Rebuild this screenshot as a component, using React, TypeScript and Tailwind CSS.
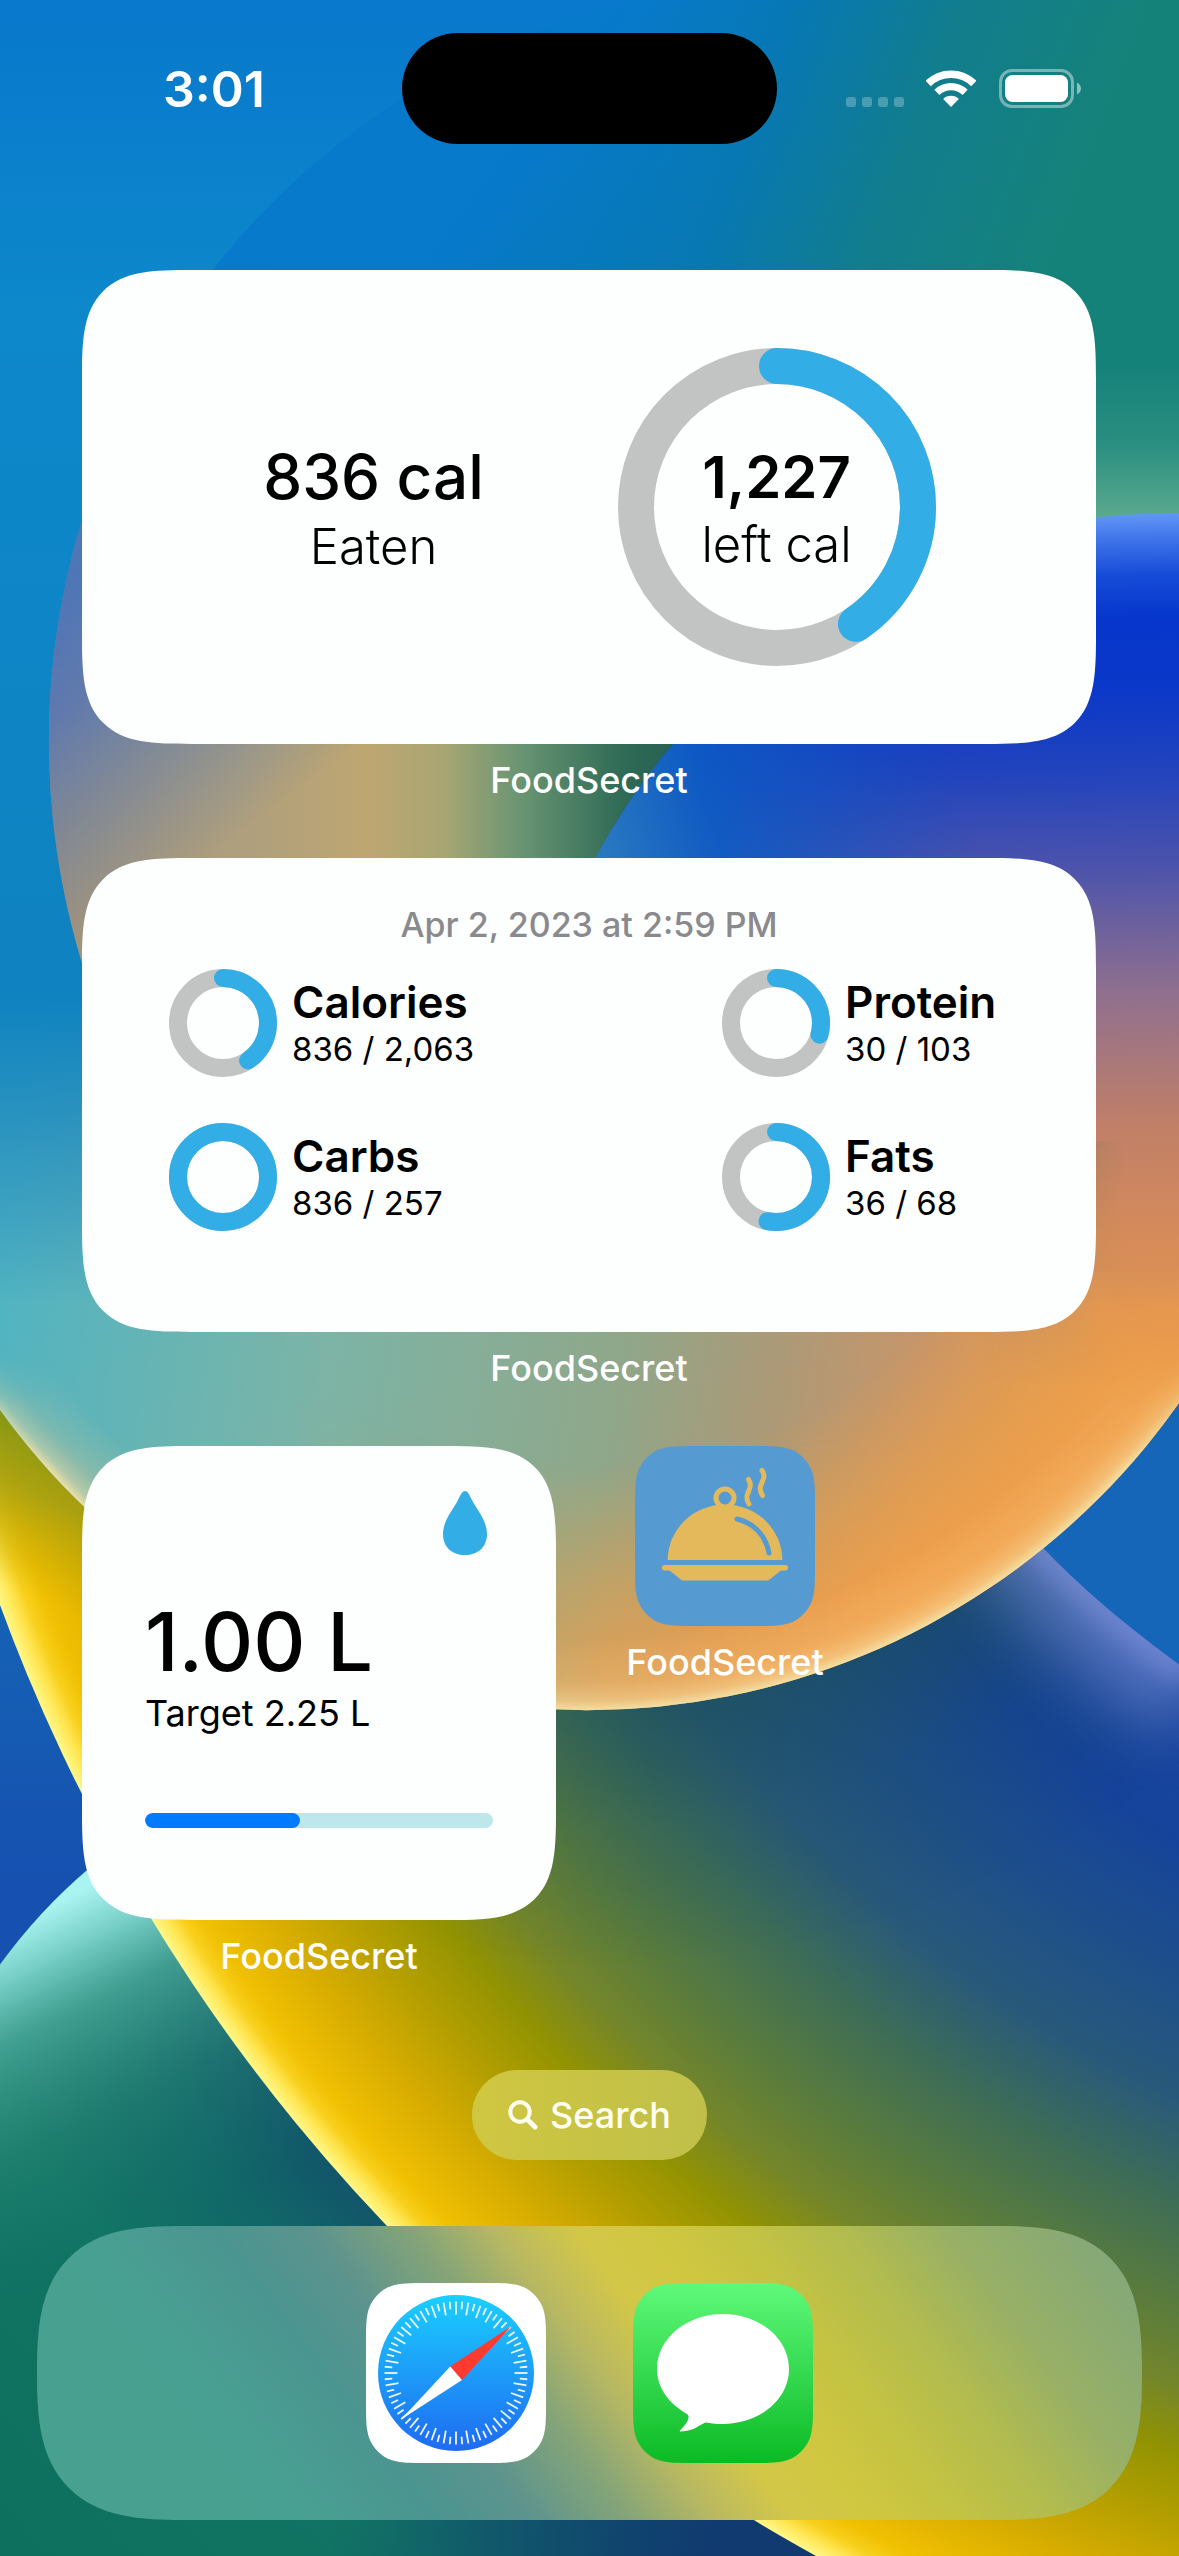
import React from "react";

const SQUIRCLE =
  "M61 0H119C136.500 0 145.300 0 154.700 3C165.100 6.800 173.200 14.900 177 25.300C180 34.700 180 43.500 180 61V119C180 136.500 180 145.300 177 154.700C173.200 165.100 165.100 173.200 154.700 177C145.300 180 136.500 180 119 180H61C43.500 180 34.700 180 25.300 177C14.900 173.200 6.800 165.100 3 154.700C0 145.300 0 136.500 0 119V61C0 43.500 0 34.700 3 25.300C6.800 14.900 14.900 6.800 25.300 3C34.700 0 43.500 0 61 0Z";

function Wallpaper() {
  return (
    <svg
      className="absolute inset-0 h-full w-full"
      viewBox="0 0 723 1568"
      preserveAspectRatio="xMidYMid slice"
      aria-hidden="true"
    >
      <defs>
        <linearGradient id="sky" x1="0" y1="0" x2="0" y2="1568" gradientUnits="userSpaceOnUse">
          <stop offset="0" stopColor="#0878cc" />
          <stop offset="0.12" stopColor="#0d88cb" />
          <stop offset="0.4" stopColor="#0f82c0" />
          <stop offset="0.57" stopColor="#146cb8" />
          <stop offset="0.74" stopColor="#1650b0" />
        </linearGradient>
        <linearGradient id="backBall" x1="170" y1="40" x2="560" y2="330" gradientUnits="userSpaceOnUse">
          <stop offset="0" stopColor="#087acc" />
          <stop offset="0.32" stopColor="#0779ca" />
          <stop offset="0.48" stopColor="#0679b8" />
          <stop offset="0.7" stopColor="#117c8e" />
          <stop offset="1" stopColor="#15827a" />
        </linearGradient>
        <linearGradient id="topTint" x1="350" y1="60" x2="640" y2="170" gradientUnits="userSpaceOnUse">
          <stop offset="0" stopColor="#067acc" stopOpacity="0" />
          <stop offset="0.35" stopColor="#0778b4" stopOpacity="0.9" />
          <stop offset="0.65" stopColor="#117d8e" />
          <stop offset="1" stopColor="#15827a" />
        </linearGradient>
        <linearGradient id="backLow" x1="30" y1="0" x2="420" y2="0" gradientUnits="userSpaceOnUse">
          <stop offset="0" stopColor="#a0927c" />
          <stop offset="0.3" stopColor="#ae9f7e" />
          <stop offset="0.5" stopColor="#bea671" />
          <stop offset="0.62" stopColor="#a8a673" />
          <stop offset="0.74" stopColor="#6a9573" />
          <stop offset="0.9" stopColor="#2f6b56" />
          <stop offset="1" stopColor="#255f52" />
        </linearGradient>
        <linearGradient id="fadeDown" x1="0" y1="260" x2="0" y2="440" gradientUnits="userSpaceOnUse">
          <stop offset="0" stopColor="#000" />
          <stop offset="0.5" stopColor="#aaa" />
          <stop offset="1" stopColor="#fff" />
        </linearGradient>
        <mask id="lowMask" maskUnits="userSpaceOnUse" x="0" y="0" width="723" height="1568">
          <rect width="723" height="1568" fill="url(#fadeDown)" />
        </mask>
        <linearGradient id="leftEdge" x1="10" y1="380" x2="120" y2="530" gradientUnits="userSpaceOnUse">
          <stop offset="0" stopColor="#3f6cc6" />
          <stop offset="0.35" stopColor="#5274b8" stopOpacity="0.8" />
          <stop offset="1" stopColor="#5c80b0" stopOpacity="0" />
        </linearGradient>
        <linearGradient id="mint" x1="0" y1="225" x2="0" y2="322" gradientUnits="userSpaceOnUse">
          <stop offset="0" stopColor="#6cb492" stopOpacity="0" />
          <stop offset="0.5" stopColor="#6cb492" stopOpacity="0.25" />
          <stop offset="1" stopColor="#6cb492" stopOpacity="0.85" />
        </linearGradient>
        <linearGradient id="blueBall" x1="690" y1="315" x2="700" y2="850" gradientUnits="userSpaceOnUse">
          <stop offset="0" stopColor="#6398f6" />
          <stop offset="0.03" stopColor="#3f74ea" />
          <stop offset="0.07" stopColor="#174cd8" />
          <stop offset="0.12" stopColor="#0636cc" />
          <stop offset="0.2" stopColor="#0a38c8" />
          <stop offset="0.3" stopColor="#2344bc" />
          <stop offset="0.4" stopColor="#4a52ac" />
          <stop offset="0.55" stopColor="#90708e" />
          <stop offset="0.7" stopColor="#c07f68" />
          <stop offset="0.85" stopColor="#da8d58" />
          <stop offset="1" stopColor="#e4944f" />
        </linearGradient>
        <linearGradient id="blueLeft" x1="355" y1="520" x2="585" y2="460" gradientUnits="userSpaceOnUse">
          <stop offset="0" stopColor="#2d80c0" />
          <stop offset="0.35" stopColor="#0c5cc4" stopOpacity="0.9" />
          <stop offset="1" stopColor="#0c50c4" stopOpacity="0" />
        </linearGradient>
        <linearGradient id="blueFade" x1="0" y1="760" x2="0" y2="850" gradientUnits="userSpaceOnUse">
          <stop offset="0" stopColor="#fff" />
          <stop offset="1" stopColor="#000" />
        </linearGradient>
        <linearGradient id="blueFadeX" x1="600" y1="0" x2="690" y2="0" gradientUnits="userSpaceOnUse">
          <stop offset="0" stopColor="#000" />
          <stop offset="1" stopColor="#000" stopOpacity="0" />
        </linearGradient>
        <mask id="blueMask" maskUnits="userSpaceOnUse" x="0" y="0" width="723" height="1568">
          <rect width="723" height="1568" fill="url(#blueFade)" />
          <rect y="700" width="723" height="868" fill="url(#blueFadeX)" />
        </mask>
        <linearGradient id="frontBall" x1="0" y1="770" x2="690" y2="880" gradientUnits="userSpaceOnUse">
          <stop offset="0" stopColor="#50b4c2" />
          <stop offset="0.3" stopColor="#7db4a6" />
          <stop offset="0.55" stopColor="#8fa78a" />
          <stop offset="0.68" stopColor="#aa9a78" />
          <stop offset="0.82" stopColor="#c99569" />
          <stop offset="1" stopColor="#e6964f" />
        </linearGradient>
        <radialGradient id="warm" cx="360" cy="605" r="444" gradientUnits="userSpaceOnUse">
          <stop offset="0.66" stopColor="#e6a04c" stopOpacity="0" />
          <stop offset="0.82" stopColor="#e9a04a" stopOpacity="0.7" />
          <stop offset="0.92" stopColor="#ee9f4b" />
        </radialGradient>
        <linearGradient id="warmX" x1="180" y1="0" x2="560" y2="0" gradientUnits="userSpaceOnUse">
          <stop offset="0" stopColor="#000" />
          <stop offset="0.5" stopColor="#bbb" />
          <stop offset="1" stopColor="#fff" />
        </linearGradient>
        <mask id="warmMask" maskUnits="userSpaceOnUse" x="0" y="0" width="723" height="1568">
          <rect y="780" width="723" height="788" fill="url(#warmX)" />
        </mask>
        <radialGradient id="frontRim" cx="360" cy="605" r="444" gradientUnits="userSpaceOnUse">
          <stop offset="0.9" stopColor="#ffd48a" stopOpacity="0" />
          <stop offset="0.96" stopColor="#ffcc84" stopOpacity="0.25" />
          <stop offset="0.987" stopColor="#fadc9c" stopOpacity="0.55" />
          <stop offset="1" stopColor="#f2e2a8" stopOpacity="0.95" />
        </radialGradient>
        <linearGradient id="rimFade" x1="0" y1="830" x2="0" y2="900" gradientUnits="userSpaceOnUse">
          <stop offset="0" stopColor="#000" />
          <stop offset="0.5" stopColor="#aaa" />
          <stop offset="1" stopColor="#fff" />
        </linearGradient>
        <mask id="rimMask" maskUnits="userSpaceOnUse" x="0" y="0" width="723" height="1568">
          <rect width="723" height="1568" fill="url(#rimFade)" />
        </mask>
        <linearGradient id="frontFade" x1="0" y1="610" x2="0" y2="800" gradientUnits="userSpaceOnUse">
          <stop offset="0" stopColor="#000" />
          <stop offset="1" stopColor="#fff" />
        </linearGradient>
        <mask id="frontMask" maskUnits="userSpaceOnUse" x="0" y="0" width="723" height="1568">
          <rect width="723" height="1568" fill="url(#frontFade)" />
        </mask>
        <radialGradient id="gold" cx="1030" cy="607" r="1097" gradientUnits="userSpaceOnUse">
          <stop offset="0.4" stopColor="#1c48a4" />
          <stop offset="0.55" stopColor="#16439b" />
          <stop offset="0.62" stopColor="#1e4f8a" />
          <stop offset="0.68" stopColor="#28597a" />
          <stop offset="0.73" stopColor="#3c6c58" />
          <stop offset="0.79" stopColor="#5a7c3c" />
          <stop offset="0.83" stopColor="#74862a" />
          <stop offset="0.865" stopColor="#929302" />
          <stop offset="0.9" stopColor="#b29e00" />
          <stop offset="0.94" stopColor="#d8ad00" />
          <stop offset="0.975" stopColor="#f0c002" />
          <stop offset="0.985" stopColor="#f8d01c" />
          <stop offset="0.993" stopColor="#ffe858" />
          <stop offset="1" stopColor="#fff88c" />
        </radialGradient>
        <radialGradient id="shade" cx="360" cy="605" r="600" gradientUnits="userSpaceOnUse">
          <stop offset="0.74" stopColor="#1c4f58" stopOpacity="0.6" />
          <stop offset="0.86" stopColor="#1c4f58" stopOpacity="0.2" />
          <stop offset="1" stopColor="#1c4f58" stopOpacity="0" />
        </radialGradient>
        <linearGradient id="shadeX" x1="240" y1="0" x2="400" y2="0" gradientUnits="userSpaceOnUse">
          <stop offset="0" stopColor="#000" />
          <stop offset="1" stopColor="#fff" />
        </linearGradient>
        <mask id="shadeMask" maskUnits="userSpaceOnUse" x="0" y="0" width="723" height="1568">
          <rect width="723" height="1568" fill="url(#shadeX)" />
        </mask>
        <linearGradient id="olive" x1="50" y1="880" x2="10" y2="975" gradientUnits="userSpaceOnUse">
          <stop offset="0" stopColor="#7f9414" />
          <stop offset="0.45" stopColor="#9c9c14" stopOpacity="0.75" />
          <stop offset="1" stopColor="#c0a800" stopOpacity="0" />
        </linearGradient>
        <radialGradient id="teal" cx="1030" cy="607" r="1400" gradientUnits="userSpaceOnUse">
          <stop offset="0.78" stopColor="#12546a" />
          <stop offset="0.82" stopColor="#116668" />
          <stop offset="0.88" stopColor="#117464" />
          <stop offset="1" stopColor="#0d705e" />
        </radialGradient>
        <linearGradient id="deep" x1="230" y1="1480" x2="440" y2="1560" gradientUnits="userSpaceOnUse">
          <stop offset="0" stopColor="#103a70" stopOpacity="0" />
          <stop offset="1" stopColor="#103a70" />
        </linearGradient>
        <linearGradient id="tealGlow" x1="20" y1="1175" x2="115" y2="1365" gradientUnits="userSpaceOnUse">
          <stop offset="0" stopColor="#a9f3f1" />
          <stop offset="0.13" stopColor="#78d0c8" />
          <stop offset="0.3" stopColor="#48a898" stopOpacity="0.85" />
          <stop offset="0.6" stopColor="#2b8a78" stopOpacity="0.5" />
          <stop offset="1" stopColor="#14756a" stopOpacity="0" />
        </linearGradient>
        <clipPath id="goldClip">
          <circle cx="1030" cy="607" r="1097" />
        </clipPath>
        <filter id="soft" x="-30%" y="-30%" width="160%" height="160%">
          <feGaussianBlur stdDeviation="7" />
        </filter>
        <filter id="softer" x="-60%" y="-60%" width="220%" height="220%">
          <feGaussianBlur stdDeviation="20" />
        </filter>
        <clipPath id="rightBall">
          <path d="M600 900Q640 962 730 1026V1200H560Z" />
        </clipPath>
      </defs>

      <rect width="723" height="1568" fill="url(#sky)" />

      <circle cx="497" cy="455" r="467" fill="url(#backBall)" />
      <rect width="723" height="480" fill="url(#topTint)" />
      <circle cx="497" cy="455" r="467" fill="url(#backLow)" mask="url(#lowMask)" />
      <circle cx="497" cy="455" r="467" fill="url(#leftEdge)" mask="url(#lowMask)" />
      <rect x="600" y="180" width="123" height="240" fill="#15827a" />
      <rect x="600" y="225" width="123" height="130" fill="url(#mint)" />

      <path d="M0 1205A333 333 0 0 1 120 1103L560 1568H0Z" fill="url(#teal)" />
      <path d="M0 1205A333 333 0 0 1 120 1103L560 1568H0Z" fill="url(#tealGlow)" />
      <rect x="200" y="1420" width="400" height="148" fill="url(#deep)" />

      <g clipPath="url(#goldClip)">
        <rect y="820" width="723" height="748" fill="url(#gold)" />
        <rect y="820" width="723" height="748" fill="url(#shade)" mask="url(#shadeMask)" />
        <rect y="820" width="90" height="180" fill="url(#olive)" />
      </g>
      <path d="M600 900Q640 962 730 1026V780H600Z" fill="#1566b8" />
      <g clipPath="url(#rightBall)" fill="none" stroke="#7f92de">
        <path d="M600 880Q640 962 740 1030" strokeWidth="80" opacity="0.6" filter="url(#softer)" />
        <path d="M600 900Q640 962 730 1026" strokeWidth="18" opacity="0.6" filter="url(#soft)" />
      </g>

      <g mask="url(#frontMask)">
        <path d="M-84 500H804V605A444 444 0 0 1 -84 605Z" fill="url(#frontBall)" />
        <circle cx="360" cy="605" r="444" fill="url(#warm)" mask="url(#warmMask)" />
        <circle cx="360" cy="605" r="444" fill="url(#frontRim)" mask="url(#rimMask)" />
      </g>
      <g mask="url(#blueMask)">
        <circle cx="719" cy="717" r="402" fill="url(#blueBall)" />
        <circle cx="719" cy="717" r="402" fill="url(#blueLeft)" />
      </g>
    </svg>
  );
}

function Ring({
  size,
  stroke,
  value,
  children,
}: {
  size: number;
  stroke: number;
  value: number;
  children?: React.ReactNode;
}) {
  const r = (size - stroke) / 2;
  const c = 2 * Math.PI * r;
  return (
    <div className="relative grid shrink-0 place-items-center">
      <svg width={size} height={size} viewBox={`0 0 ${size} ${size}`} className="-rotate-90" aria-hidden="true">
        <circle cx={size / 2} cy={size / 2} r={r} fill="none" stroke="#c2c4c3" strokeWidth={stroke} />
        <circle
          cx={size / 2}
          cy={size / 2}
          r={r}
          fill="none"
          stroke="#32ade6"
          strokeWidth={stroke}
          strokeLinecap="round"
          strokeDasharray={`${c * Math.min(value, 1)} ${c}`}
        />
      </svg>
      {children && <div className="absolute inset-0 grid place-content-center pt-1 text-center">{children}</div>}
    </div>
  );
}

function WidgetCard({ children, className }: { children: React.ReactNode; className: string }) {
  return (
    <section
      className={`h-[474px] rounded-[72px] bg-[#fcfffd] text-black supports-[corner-shape:squircle]:rounded-[110px] supports-[corner-shape:squircle]:[corner-shape:superellipse(1.7)] ${className}`}
    >
      {children}
    </section>
  );
}

function Label() {
  return <p className="mt-[15px] mb-[57px] text-center text-[36px] leading-[42px] font-medium text-white">FoodSecret</p>;
}

const macros = [
  { name: "Calories", text: "836 / 2,063", value: 836 / 2063 },
  { name: "Protein", text: "30 / 103", value: 30 / 103 },
  { name: "Carbs", text: "836 / 257", value: 1 },
  { name: "Fats", text: "36 / 68", value: 36 / 68 },
];

function FoodIcon() {
  return (
    <svg viewBox="0 0 180 180" className="size-[180px]" aria-hidden="true">
      <path d={SQUIRCLE} fill="#559bd1" />
      <g fill="#e4b95c">
        <path d="M32.700 114A57.300 55.500 0 0 1 147.300 114Z" />
        <rect x="27" y="119" width="126" height="5.500" rx="2.700" />
        <path d="M34 124L47 134.500H133.300L146.500 124Z" />
      </g>
      <g fill="none" strokeLinecap="round" strokeWidth="5">
        <circle cx="90" cy="52" r="9" fill="#559bd1" stroke="#e4b95c" />
        <path d="M102 73C119 77 131 90 134 107" stroke="#559bd1" />
        <path d="M113.500 33.500C120 43 107 47 114 58" stroke="#e4b95c" />
        <path d="M127 24.500C134 34 120 38 127.500 49.500" stroke="#e4b95c" />
      </g>
    </svg>
  );
}

function SafariIcon() {
  return (
    <svg viewBox="0 0 180 180" className="size-[180px]" aria-hidden="true">
      <defs>
        <linearGradient id="safari" x1="0" y1="0" x2="0" y2="1">
          <stop offset="0" stopColor="#1bcfff" />
          <stop offset="1" stopColor="#1e6af1" />
        </linearGradient>
      </defs>
      <path d={SQUIRCLE} fill="#fff" />
      <circle cx="90" cy="90" r="78" fill="url(#safari)" />
      <g stroke="#fff" strokeWidth="1.800" opacity="0.92">
        {Array.from({ length: 72 }, (_, i) => (
          <path key={i} d={i % 2 ? "M90 18.500V26" : "M90 18.500V31.500"} transform={`rotate(${i * 5} 90 90)`} />
        ))}
      </g>
      <path d="M145.500 43L84.200 83.500L96 97Z" fill="#ff3b30" />
      <path d="M35 136.500L84.200 83.500L96 97Z" fill="#fff" />
    </svg>
  );
}

function MessagesIcon() {
  return (
    <svg viewBox="0 0 180 180" className="size-[180px]" aria-hidden="true">
      <defs>
        <linearGradient id="messages" x1="0" y1="0" x2="0" y2="1">
          <stop offset="0" stopColor="#5ff97a" />
          <stop offset="1" stopColor="#0bba25" />
        </linearGradient>
      </defs>
      <path d={SQUIRCLE} fill="url(#messages)" />
      <path
        d="M90 31C126.500 31 156 55.600 156 86S126.500 141 90 141C84 141 79.500 140.500 73 139.500C69.500 139.300 62 148.500 47.500 148.500C46.800 148.500 46.600 147.900 47 147.400C54 141 58 133.500 54 131C36 120.500 24 105 24 86C24 55.600 53.500 31 90 31Z"
        fill="#fff"
      />
    </svg>
  );
}

export default function App() {
  return (
    <div className="relative overflow-hidden font-[Inter,sans-serif] text-white">
      <Wallpaper />
      <div className="relative flex flex-col">
        <header className="grid grid-cols-[1fr_375px_1fr] items-center px-6 pt-[33px]">
          <time className="pl-[2px] text-center text-[50px] leading-[60px] font-semibold">3:01</time>
          <div className="h-[111px] rounded-full bg-black" />
          <div className="flex items-center justify-center pr-[6px]">
            <svg viewBox="0 0 58 37" className="h-[37px] w-[58px]" aria-label="No signal" role="img">
              {[0, 16, 32, 48].map((x) => (
                <rect key={x} x={x} y="27" width="10" height="10" rx="3" fill="#fff" opacity="0.25" />
              ))}
            </svg>
            <svg viewBox="0 0 50 37" className="ml-[22px] h-[37px] w-[50px]" aria-label="Wi-Fi" role="img">
              <g fill="none" stroke="#fff">
                <path d="M2.200 13.500A32.800 32.800 0 0 1 47.800 13.500" strokeWidth="7.600" />
                <path d="M10.900 22.400A20.300 20.300 0 0 1 39.100 22.400" strokeWidth="7.200" />
              </g>
              <path d="M25 37L17.200 29.100A11 11 0 0 1 32.800 29.100Z" fill="#fff" />
            </svg>
            <svg viewBox="0 0 82 39" className="ml-[23px] h-[39px] w-[82px]" aria-label="Battery full" role="img">
              <rect x="1.500" y="1.500" width="72" height="36" rx="11.500" fill="none" stroke="#fff" strokeWidth="3" opacity="0.42" />
              <rect x="6" y="6" width="63" height="27" rx="7.500" fill="#fff" />
              <path d="M78 13.500C83.300 16 83.300 23 78 25.500Z" fill="#fff" opacity="0.5" />
            </svg>
          </div>
        </header>

        <main className="mt-[126px] pr-[83px] pl-[82px]">
          <WidgetCard className="grid grid-cols-2 items-center pr-[118px] pl-[90px]">
            <div className="pt-1 text-center">
              <p className="text-[62px] leading-[72px] font-medium">836 cal</p>
              <p className="mt-1 text-[49px] leading-[60px] font-light">Eaten</p>
            </div>
            <div className="grid place-items-center">
              <Ring size={318} stroke={36} value={836 / 2063}>
                <p className="text-[58px] leading-[68px] font-semibold">1,227</p>
                <p className="mt-1 text-[49px] leading-[60px] font-light">left cal</p>
              </Ring>
            </div>
          </WidgetCard>
          <Label />

          <WidgetCard className="px-[87px] pt-[46px]">
            <p className="text-center text-[34px] leading-[42px] font-medium text-[#8a8a8e]">
              Apr 2, 2023 at 2:59 PM
            </p>
            <ul className="mt-[23px] grid grid-cols-[1fr_287px] gap-y-[46px]">
              {macros.map((m) => (
                <li key={m.name} className="flex items-center gap-[15px]">
                  <Ring size={108} stroke={18} value={m.value} />
                  <div className="whitespace-nowrap">
                    <p className="text-[44px] leading-[52px] font-semibold">{m.name}</p>
                    <p className="text-[33px] leading-[42px]">{m.text}</p>
                  </div>
                </li>
              ))}
            </ul>
          </WidgetCard>
          <Label />

          <div className="flex items-start gap-[79px]">
            <div className="w-[474px] shrink-0">
              <WidgetCard className="flex flex-col px-[63px] pt-[45px]">
                <svg viewBox="0 0 44 64" className="mr-[6px] h-[64px] w-[44px] self-end" aria-hidden="true">
                  <path
                    d="M22 0C24.500 0 26 3 29 9C33 17.500 44 29 44 43C44 56 35 64 22 64S0 56 0 43C0 29 11 17.500 15 9C18 3 19.500 0 22 0Z"
                    fill="#32ade6"
                  />
                </svg>
                <p className="mt-[38px] text-[81px] leading-[98px] font-medium">1.00 L</p>
                <p className="text-[36px] leading-[44px]">Target 2.25 L</p>
                <div
                  role="progressbar"
                  aria-label="Water"
                  aria-valuenow={44}
                  className="mt-[78px] h-[15px] overflow-hidden rounded-full bg-[#bee7eb]"
                >
                  <div className="h-full rounded-full bg-[#007aff]" style={{ width: `${(1 / 2.25) * 100}%` }} />
                </div>
              </WidgetCard>
              <p className="mt-[15px] text-center text-[36px] leading-[42px] font-medium">FoodSecret</p>
            </div>
            <button type="button" className="flex w-[180px] flex-col items-center">
              <FoodIcon />
              <span className="mt-[15px] text-[36px] leading-[42px] font-medium">FoodSecret</span>
            </button>
          </div>
        </main>

        <button
          type="button"
          className="mt-[93px] flex h-[90px] items-center gap-[12px] self-center rounded-full bg-linear-to-r from-[#d0c740] to-[#bfbf4a] px-[36px] text-[36px] font-medium text-[#fffff0]"
        >
          <svg viewBox="0 0 30 30" className="size-[30px]" fill="none" stroke="currentColor" aria-hidden="true">
            <circle cx="12" cy="12" r="9.700" strokeWidth="4" />
            <path d="M19.500 19.500L27 27" strokeWidth="5" strokeLinecap="round" />
          </svg>
          Search
        </button>

        <nav
          aria-label="Dock"
          className="mx-[37px] mt-[66px] mb-[36px] flex h-[294px] items-center justify-center gap-[87px] rounded-[110px] bg-[linear-gradient(53deg,#48a08f_0%,#48a092_20%,#4b9590_30%,#5c938e_37%,#86a577_45%,#b8b862_51%,#d3c748_57%,#d0c740_63%,#c5c342_69%,#b2bc4e_77%,#98b066_85%,#84a878_96%)] supports-[corner-shape:squircle]:rounded-[147px] supports-[corner-shape:squircle]:[corner-shape:superellipse(1.5)]"
        >
          <button type="button" aria-label="Safari">
            <SafariIcon />
          </button>
          <button type="button" aria-label="Messages">
            <MessagesIcon />
          </button>
        </nav>
      </div>
    </div>
  );
}
